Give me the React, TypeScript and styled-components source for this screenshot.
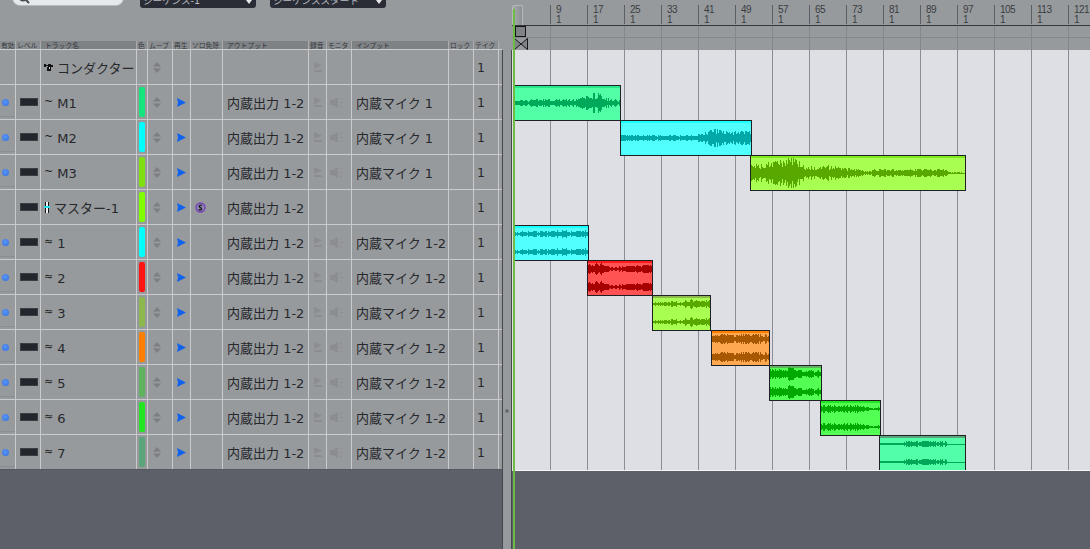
import styled, { createGlobalStyle } from "styled-components";

const GlobalStyle = createGlobalStyle`
  html, body { margin: 0; padding: 0; background: #979a9d; overflow: hidden; }
  body { font-family: "DejaVu Sans", "Noto Sans CJK JP", sans-serif; }
`;

const COLS = "16px 25px 96px 11px 25px 18px 32px 86px 18px 25px 97px 25px 25px 3px";
const GRID_LINE = "#c9cbcd";

type Track = {
  kind: "conductor" | "master" | "mono" | "stereo";
  name: string;
  color?: string;
  output?: string;
  input?: string;
};

const tracks: Track[] = [
  { kind: "conductor", name: "コンダクター" },
  { kind: "mono", name: "M1", color: "#14e67d", output: "内蔵出力 1-2", input: "内蔵マイク 1" },
  { kind: "mono", name: "M2", color: "#00ffff", output: "内蔵出力 1-2", input: "内蔵マイク 1" },
  { kind: "mono", name: "M3", color: "#7fe010", output: "内蔵出力 1-2", input: "内蔵マイク 1" },
  { kind: "master", name: "マスター-1", color: "#80ff00", output: "内蔵出力 1-2" },
  { kind: "stereo", name: "1", color: "#00ffff", output: "内蔵出力 1-2", input: "内蔵マイク 1-2" },
  { kind: "stereo", name: "2", color: "#ff1414", output: "内蔵出力 1-2", input: "内蔵マイク 1-2" },
  { kind: "stereo", name: "3", color: "#8cb84d", output: "内蔵出力 1-2", input: "内蔵マイク 1-2" },
  { kind: "stereo", name: "4", color: "#ff8000", output: "内蔵出力 1-2", input: "内蔵マイク 1-2" },
  { kind: "stereo", name: "5", color: "#5fb35f", output: "内蔵出力 1-2", input: "内蔵マイク 1-2" },
  { kind: "stereo", name: "6", color: "#22e622", output: "内蔵出力 1-2", input: "内蔵マイク 1-2" },
  { kind: "stereo", name: "7", color: "#5aa67a", output: "内蔵出力 1-2", input: "内蔵マイク 1-2" },
];

const headers = [
  "有効", "レベル", "トラック名", "色", "ムーブ", "再生", "ソロ免除", "アウトプット",
  "録音", "モニタ", "インプット", "ロック", "テイク", "",
];
const darkHeaders = [2, 7, 10];

type Clip = {
  row: number;
  left: number;
  width: number;
  fill: string;
  strip: string;
  wave: string;
  amp: number;
  env: [number, number][];
  seed: number;
};

const clips: Clip[] = [
  { row: 1, left: 2, width: 107, fill: "#52ffa6", strip: "#29e88a", wave: "#00a85a", amp: 9, seed: 3,
    env: [[0, 0.3], [0.3, 0.38], [0.55, 0.35], [0.68, 0.65], [0.76, 1], [0.86, 0.45], [1, 0.2]] },
  { row: 2, left: 108, width: 132, fill: "#52ffff", strip: "#1affff", wave: "#00a8a8", amp: 9, seed: 11,
    env: [[0, 0.3], [0.4, 0.3], [0.6, 0.4], [0.7, 0.85], [0.8, 0.6], [0.88, 0.85], [1, 0.65]] },
  { row: 3, left: 238, width: 216, fill: "#a8ff52", strip: "#80e620", wave: "#58a800", amp: 14, seed: 23,
    env: [[0, 0.5], [0.12, 0.7], [0.2, 1], [0.25, 0.4], [0.36, 0.45], [0.44, 0.32], [0.55, 0.1], [0.57, 0.26], [0.9, 0.22], [0.92, 0.04], [1, 0.03]] },
  { row: 5, left: 2, width: 75, fill: "#52ffff", strip: "#1affff", wave: "#00a8a8", amp: 4, seed: 31,
    env: [[0, 0.6], [0.5, 0.6], [0.6, 0.8], [0.8, 0.55], [1, 0.9]] },
  { row: 6, left: 75, width: 66, fill: "#ff5252", strip: "#ff1a1a", wave: "#a80000", amp: 5, seed: 41,
    env: [[0, 0.9], [0.2, 0.9], [0.35, 0.3], [0.5, 0.5], [1, 0.8]] },
  { row: 7, left: 140, width: 59, fill: "#a8ff52", strip: "#8cb84d", wave: "#58a800", amp: 5, seed: 53,
    env: [[0, 0.3], [0.5, 0.5], [0.7, 0.8], [0.85, 0.5], [1, 0.9]] },
  { row: 8, left: 199, width: 59, fill: "#ffa852", strip: "#ff8000", wave: "#a85800", amp: 5, seed: 61,
    env: [[0, 0.5], [0.2, 0.9], [0.4, 0.6], [0.55, 0.9], [1, 0.8]] },
  { row: 9, left: 257, width: 53, fill: "#52ff52", strip: "#5fb35f", wave: "#00a800", amp: 7, seed: 71,
    env: [[0, 0.6], [0.3, 0.7], [0.38, 1], [0.55, 0.5], [0.75, 0.4], [1, 0.45]] },
  { row: 10, left: 308, width: 61, fill: "#52ff52", strip: "#22e622", wave: "#00a800", amp: 4, seed: 83,
    env: [[0, 0.8], [0.5, 0.8], [0.7, 0.7], [0.85, 0.12], [1, 0.5]] },
  { row: 11, left: 367, width: 87, fill: "#52ffa8", strip: "#5aa67a", wave: "#00a858", amp: 3, seed: 97,
    env: [[0, 0.35], [0.25, 0.35], [0.3, 0.9], [0.65, 0.9], [0.76, 0.8], [0.77, 0.12], [1, 0.12]] },
];

const rulerLabels = Array.from({ length: 15 }, (_, i) => 9 + i * 8);

const envAt = (env: [number, number][], t: number) => {
  for (let i = 1; i < env.length; i++) {
    if (t <= env[i][0]) {
      const [t0, v0] = env[i - 1];
      const [t1, v1] = env[i];
      return v0 + ((v1 - v0) * (t - t0)) / (t1 - t0);
    }
  }
  return env[env.length - 1][1];
};

// same seed gives the same wave form, the stereo channels share it
const wavePath = (clip: Clip, centers: number[]) => {
  let seed = clip.seed * 7919;
  let d = "";
  for (let x = 0; x < clip.width - 2; x++) {
    seed = (seed * 1103515245 + 12345) % 2147483648;
    const noise = 0.5 + ((seed >> 8) % 100) / 125;
    const a = Math.max(0.5, Math.round(clip.amp * envAt(clip.env, x / clip.width) * noise));
    centers.forEach((cy) => {
      d += `M${x} ${cy - a}h1v${a * 2}h-1z`;
    });
  }
  return d;
};

const Page = styled.div`
  display: flex;
  width: 1090px;
  height: 549px;
  overflow: hidden;
  background: #979a9d;
`;

const LeftPane = styled.div`
  display: flex;
  flex-direction: column;
  width: 502px;
  flex-shrink: 0;
  background: #5d6068;
`;

const Toolbar = styled.div`
  display: flex;
  height: 41px;
  background: #979a9d;
  padding-left: 12px;
  overflow: hidden;
`;

const SearchBox = styled.div`
  width: 112px;
  height: 20px;
  margin-top: -14px;
  border-radius: 8px;
  background: #e6e9eb;
  border: 1px solid #b8babc;
  box-sizing: border-box;
  padding: 10px 0 0 5px;
  display: flex;
`;

const Dropdown = styled.div<{ $first?: boolean }>`
  display: flex;
  align-items: flex-end;
  justify-content: space-between;
  box-sizing: border-box;
  width: 116px;
  height: 20px;
  margin: -12px 0 0 ${(p) => (p.$first ? 16 : 14)}px;
  padding: 0 4px 1px 3px;
  border-radius: 3px;
  background: #2a2d35;
  color: #b9bcc2;
  font-size: 9.6px;
  line-height: 13px;
  white-space: nowrap;
`;

const Chevron = styled.span`
  width: 0;
  height: 0;
  margin-bottom: 3px;
  border-left: 3px solid transparent;
  border-right: 3px solid transparent;
  border-top: 4px solid #e8e8ea;
`;

const HeaderRow = styled.div`
  display: grid;
  grid-template-columns: ${COLS};
  height: 9px;
  box-sizing: border-box;
  background: #979a9d;
  border-bottom: 1px solid ${GRID_LINE};
`;

const HeaderCell = styled.div<{ $dark: boolean }>`
  height: 8px;
  padding-left: ${(p) => (p.$dark ? 4 : 1)}px;
  background: ${(p) => (p.$dark ? "#7e8285" : "#8b8e91")};
  border-right: 1px solid #a9abad;
  color: #33363a;
  font-family: "Noto Sans CJK JP", sans-serif;
  font-size: 6.8px;
  line-height: 8px;
  white-space: nowrap;
  overflow: hidden;
  &:last-child {
    background: #979a9d;
    border-right: 0;
  }
`;

const Row = styled.div`
  display: grid;
  grid-template-columns: ${COLS};
  height: 35px;
  box-sizing: border-box;
  background: #979a9d;
  border-bottom: 1px solid ${GRID_LINE};
  &:last-child {
    height: 35px;
    border-bottom: 1px solid #55585e;
  }
`;

const Cell = styled.div<{ $shade?: boolean }>`
  display: flex;
  align-items: center;
  justify-content: center;
  min-width: 0;
  border-right: 1px solid ${GRID_LINE};
  ${(p) => p.$shade && "box-shadow: inset 0 -2px #979a9d, inset 0 -3px #8b8e91;"}
  &:last-child {
    border-right: 0;
  }
`;

const TextCell = styled(Cell)`
  justify-content: flex-start;
  padding: 1px 0 0 4px;
  font-size: 13px;
  color: #26282c;
  white-space: nowrap;
  overflow: hidden;
`;

const NameCell = styled(TextCell)<{ $latin: boolean }>`
  padding: ${(p) => (p.$latin ? 3 : 1)}px 0 0 3px;
  gap: 4px;
  font-size: 13px;
`;

const TakeCell = styled(TextCell)`
  padding-left: 3px;
  font-size: 12.5px;
`;

const WaveMark = styled.span`
  font-size: 11px;
  margin-top: -4px;
  color: #1d1f22;
`;

const Dot = styled.span`
  width: 7px;
  height: 7px;
  margin-right: 4px;
  border-radius: 50%;
  background: radial-gradient(circle at 45% 40%, #5a96f5, #2f6fe0);
`;

const LevelMeter = styled.span`
  width: 16px;
  height: 6px;
  margin-left: 1px;
  border: 1px solid #3a3d42;
  background: #23262c;
`;

const ColorBar = styled.span<{ $color: string }>`
  width: 6px;
  height: 30px;
  border-radius: 2px;
  background: ${(p) => p.$color};
`;

const MoveSlot = styled.span`
  display: flex;
  margin-right: 7px;
`;

const MonitorSlot = styled.span`
  display: flex;
  margin-right: 4px;
`;

const SoloSlot = styled.span`
  display: flex;
  margin-right: 12px;
`;

const Divider = styled.div`
  position: relative;
  width: 10px;
  flex-shrink: 0;
  margin-top: 50px;
  box-sizing: border-box;
  background: #979a9d;
  border-left: 1px solid #46484d;
  border-right: 1px solid #46484d;
`;

const DividerKnob = styled.span`
  position: absolute;
  left: 2px;
  top: 359px;
  width: 4px;
  height: 4px;
  border-radius: 50%;
  background: radial-gradient(circle, #55585c, #85888b);
`;

const Arrange = styled.div`
  position: relative;
  flex: 1;
  display: flex;
  flex-direction: column;
  min-width: 0;
  background: #5d6068;
`;

const Ruler = styled.div`
  display: flex;
  height: 26px;
  box-sizing: border-box;
  padding: 5px 0 0 38px;
  background: #979a9d;
  border-bottom: 1px solid #33363a;
  overflow: hidden;
`;

const RulerMark = styled.div`
  flex: 0 0 37px;
  box-sizing: border-box;
  height: 19px;
  padding-left: 5px;
  border-left: 1px solid #5b5e63;
  color: #3a3d42;
  font-family: "Liberation Sans", sans-serif;
  font-size: 10px;
  letter-spacing: -0.5px;
  line-height: 10px;
`;

const gridLines = (color: string) => `
  background-image: linear-gradient(to right, ${color} 1px, transparent 1px);
  background-size: 37px 100%;
  background-position: 38px 0;
`;

const MarkerLane = styled.div<{ $line?: boolean }>`
  position: relative;
  height: 12px;
  box-sizing: border-box;
  background-color: #979a9d;
  ${gridLines("#85858d")}
  border-bottom: ${(p) => (p.$line ? "1px solid #85858d" : "0")};
`;

const MarkerBox = styled.span`
  position: absolute;
  left: 3px;
  top: 0;
  width: 11px;
  height: 11px;
  box-sizing: border-box;
  border: 1px solid #141518;
  background: #808285;
`;

const TempoMark = styled.svg`
  position: absolute;
  left: 2px;
  top: 0;
`;

const Lanes = styled.div`
  position: relative;
  height: 420px;
  box-sizing: border-box;
  background-color: #dddfe4;
  ${gridLines("#8c8c96")}
  overflow: hidden;
`;

const BottomEdge = styled.div`
  height: 1px;
  background: #f4f5f6;
`;

const ClipBox = styled.div<{ $fill: string; $strip: string }>`
  position: absolute;
  height: 36px;
  box-sizing: border-box;
  border: 1px solid #1e2024;
  background: ${(p) => p.$fill};
  box-shadow: inset 0 2px ${(p) => p.$strip};
  svg {
    display: block;
  }
`;

const Playhead = styled.div`
  position: absolute;
  left: 1px;
  top: 9px;
  bottom: 0;
  width: 2px;
  background: #6cbb42;
  z-index: 3;
`;

const PlayheadHandle = styled.div`
  position: absolute;
  left: 0;
  top: 5px;
  width: 11px;
  height: 20px;
  box-sizing: border-box;
  border: 1px solid #b5b7b9;
  border-bottom: 0;
  border-radius: 2px 2px 0 0;
  background: linear-gradient(to right, #a6a8aa, #8d9093);
  z-index: 2;
`;

const MoveIcon = () => (
  <svg width="8" height="11" viewBox="0 0 8 11">
    <path d="M4 0 8 4.5H0zM0 6.5h8L4 11z" fill="#7d7f82" />
  </svg>
);

const PlayIcon = () => (
  <svg width="9" height="9" viewBox="0 0 9 9">
    <path d="M0 0 9 4.5 0 9 1 4.5z" fill="#0f63ef" />
  </svg>
);

const RecIcon = () => (
  <svg width="8" height="10" viewBox="0 0 8 10">
    <path d="M0 0 8 3.5 0 7zM0 8h8v2H0z" fill="#8b8d90" />
  </svg>
);

const MonitorIcon = () => (
  <svg width="14" height="11" viewBox="0 0 14 11">
    <path d="M0 3h3l5-3v11L3 8H0z" fill="#8b8d90" />
    <path d="M10 2l2-1M10 5.5h3M10 9l2 1" stroke="#8b8d90" fill="none" />
  </svg>
);

const ConductorIcon = () => (
  <svg width="9" height="9" viewBox="0 0 9 9" shapeRendering="crispEdges">
    <path d="M0 1h2v1h2V1h3v1h2v2H7v4H3V4h1V3H2v1H0z" fill="#111214" />
    <path d="M5 4h1v2H5z" fill="#c9cbcd" />
  </svg>
);

const MasterIcon = () => (
  <svg width="6" height="11" viewBox="0 0 6 11" shapeRendering="crispEdges">
    <path d="M1 0h1v11H1zM4 0h1v11H4z" fill="#111214" />
    <path d="M0 4h6v2H0z" fill="#22e0f0" />
    <path d="M2 0h2v4H2zM2 6h2v5H2z" fill="#f2f4f5" />
  </svg>
);

const SoloSafeIcon = () => (
  <svg width="11" height="11" viewBox="0 0 11 11">
    <circle cx="5.5" cy="5.5" r="4.5" fill="#8a84a8" stroke="#7a3fc0" strokeWidth="1.4" />
    <path d="M7 3.5C5 2.5 3.6 3.8 4.6 5c.8.8 2.2.8 2 2.2-.3 1-2 1-3 .2" fill="none" stroke="#1c1c24" strokeWidth="1.3" />
  </svg>
);

const SearchIcon = () => (
  <svg width="12" height="12" viewBox="0 0 12 12" style={{ marginTop: -5 }}>
    <circle cx="5" cy="5" r="3.6" fill="none" stroke="#4a4c50" strokeWidth="1.8" />
    <path d="M7.8 7.8 11 11" stroke="#4a4c50" strokeWidth="2" />
  </svg>
);

const TrackRow = ({ track }: { track: Track }) => {
  const { kind } = track;
  const audio = kind === "mono" || kind === "stereo";
  const mark = kind === "mono" ? "~" : kind === "stereo" ? "≈" : null;
  return (
    <Row>
      <Cell $shade={audio}>{audio && <Dot />}</Cell>
      <Cell>{kind !== "conductor" && <LevelMeter />}</Cell>
      <NameCell $latin={audio}>
        {kind === "conductor" && <ConductorIcon />}
        {kind === "master" && <MasterIcon />}
        {mark && <WaveMark>{mark}</WaveMark>}
        <span>{track.name}</span>
      </NameCell>
      <Cell>{track.color && <ColorBar $color={track.color} />}</Cell>
      <Cell>
        <MoveSlot>
          <MoveIcon />
        </MoveSlot>
      </Cell>
      <Cell>{kind !== "conductor" && <PlayIcon />}</Cell>
      <Cell>
        {kind === "master" && (
          <SoloSlot>
            <SoloSafeIcon />
          </SoloSlot>
        )}
      </Cell>
      <TextCell>{track.output}</TextCell>
      <Cell>{kind !== "master" && <RecIcon />}</Cell>
      <Cell>
        {audio && (
          <MonitorSlot>
            <MonitorIcon />
          </MonitorSlot>
        )}
      </Cell>
      <TextCell>{track.input}</TextCell>
      <Cell />
      <TakeCell>1</TakeCell>
      <Cell />
    </Row>
  );
};

const ClipView = ({ clip }: { clip: Clip }) => {
  const stereo = clip.row >= 5;
  const centers = stereo ? [8, 26] : [17];
  return (
    <ClipBox
      $fill={clip.fill}
      $strip={clip.strip}
      style={{ left: clip.left, top: clip.row * 35, width: clip.width }}
    >
      <svg width={clip.width - 2} height="34" shapeRendering="crispEdges">
        <path d={wavePath(clip, centers)} fill={clip.wave} />
      </svg>
    </ClipBox>
  );
};

export default function App() {
  return (
    <>
      <GlobalStyle />
      <Page>
        <LeftPane>
          <Toolbar>
            <SearchBox>
              <SearchIcon />
            </SearchBox>
            <Dropdown $first>
              シーケンス-1
              <Chevron />
            </Dropdown>
            <Dropdown>
              シーケンススタート
              <Chevron />
            </Dropdown>
          </Toolbar>
          <HeaderRow>
            {headers.map((h, i) => (
              <HeaderCell key={i} $dark={darkHeaders.includes(i)}>
                {h}
              </HeaderCell>
            ))}
          </HeaderRow>
          <div>
            {tracks.map((t, i) => (
              <TrackRow key={i} track={t} />
            ))}
          </div>
        </LeftPane>
        <Divider>
          <DividerKnob />
        </Divider>
        <Arrange>
          <PlayheadHandle />
          <Playhead />
          <Ruler>
            {rulerLabels.map((n) => (
              <RulerMark key={n}>
                {n}
                <br />1
              </RulerMark>
            ))}
          </Ruler>
          <MarkerLane $line>
            <MarkerBox />
          </MarkerLane>
          <MarkerLane>
            <TempoMark width="14" height="12" viewBox="0 0 14 12">
              <path d="M.5.5 13.5 11.5V.5L.5 11.5z" fill="#808285" stroke="#141518" />
            </TempoMark>
          </MarkerLane>
          <Lanes>
            {clips.map((c) => (
              <ClipView key={c.row} clip={c} />
            ))}
          </Lanes>
          <BottomEdge />
        </Arrange>
      </Page>
    </>
  );
}
